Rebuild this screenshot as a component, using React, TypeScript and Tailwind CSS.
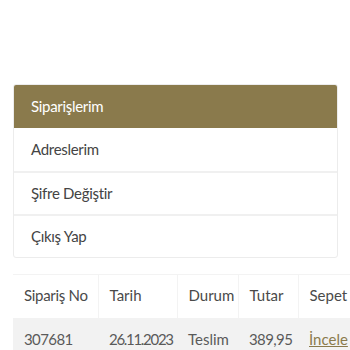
export default function App() {
  const items = ["Adreslerim", "Şifre Değiştir", "Çıkış Yap"];
  return (
    <div className="w-[350px] h-[350px] overflow-hidden bg-white pt-[84px] text-[15px]" style={{ fontFamily: "Lato, 'Noto Sans', sans-serif" }}>
      <div className="mx-[13px] w-[325px] border border-[#ececec] rounded-[3px] overflow-hidden">
        <div className="h-[43px] bg-[#8a7a4c] text-white flex items-center pl-[17px] tracking-[-0.3px]">Siparişlerim</div>
        {items.map((t, i) => (
          <div key={t} className={`h-[43px] flex items-center pl-[17px] text-[#444] tracking-[-0.3px] ${i > 0 ? "border-t-2 border-[#f0f0f0]" : ""}`}>{t}</div>
        ))}
      </div>
      <table className="ml-[13px] mt-[16px] border-collapse table-fixed w-[400px] text-[15px]">
        <colgroup>
          <col className="w-[85px]" />
          <col className="w-[79px]" />
          <col className="w-[61px]" />
          <col className="w-[60px]" />
          <col className="w-[115px]" />
        </colgroup>
        <thead>
          <tr className="h-[43px] text-[#4a4a4a] border-t border-[#f3f3f3]">
            <th className="text-left font-normal pl-[11px] pb-[3px] border-r border-[#f3f3f3] whitespace-nowrap tracking-[-0.3px]">Sipariş No</th>
            <th className="text-left font-normal pl-[11px] pb-[3px] border-r border-[#f3f3f3]">Tarih</th>
            <th className="text-left font-normal pl-[11px] pb-[3px] border-r border-[#f3f3f3]">Durum</th>
            <th className="text-left font-normal pl-[11px] pb-[3px] border-r border-[#f3f3f3]">Tutar</th>
            <th className="text-left font-normal pl-[11px] pb-[3px]">Sepet</th>
          </tr>
        </thead>
        <tbody>
          <tr className="h-[46px] bg-[#f2f2f2] text-[#5a5a5a]">
            <td className="pl-[11px] pb-[3px] tracking-[-0.6px]">307681</td>
            <td className="pl-[11px] pb-[3px] tracking-[-1.3px] whitespace-nowrap">26.11.2023</td>
            <td className="pl-[11px] pb-[3px]">Teslim</td>
            <td className="pl-[11px] pb-[3px] tracking-[-0.6px]">389,95</td>
            <td className="pl-[11px] pb-[3px]"><span className="underline text-[#8a7a4c]">İncele</span></td>
          </tr>
        </tbody>
      </table>
    </div>
  );
}
